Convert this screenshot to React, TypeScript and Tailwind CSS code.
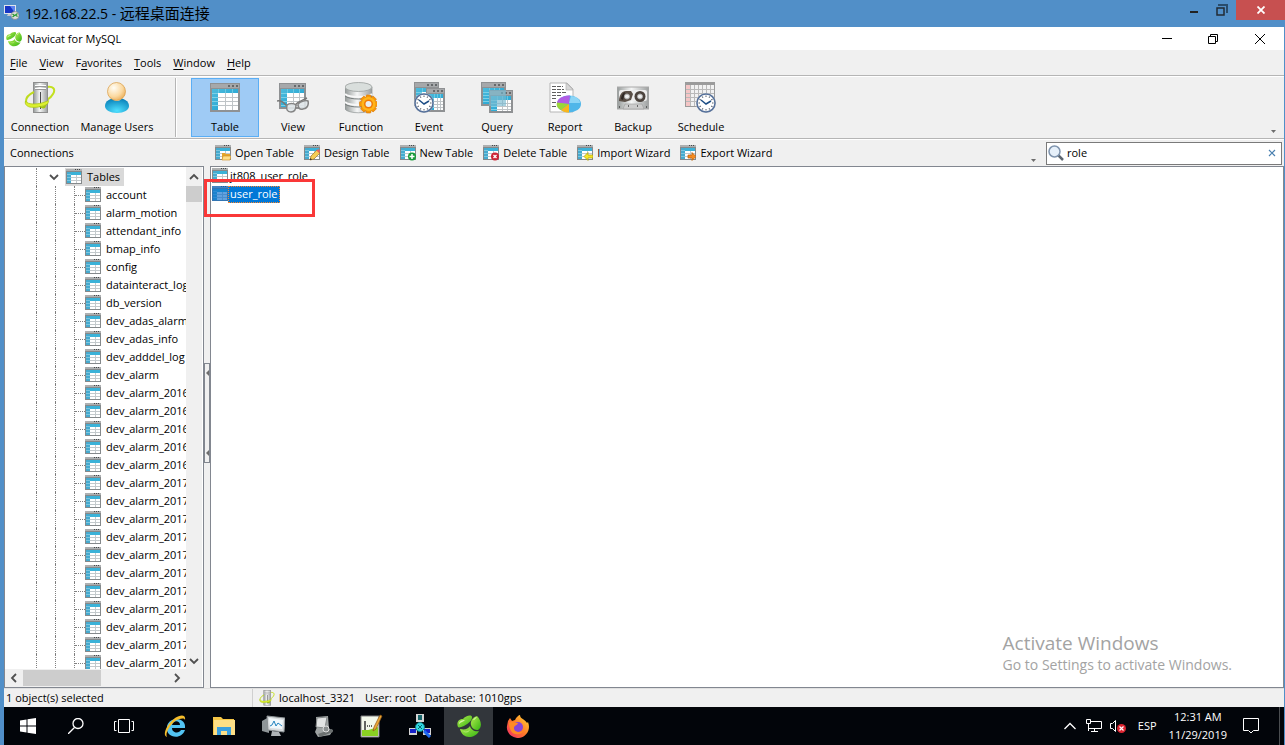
import React, { useState } from 'react'

type IconProps = { className?: string }

// Window with a grid, shared by the toolbar icons
const GridWindow: React.FC<{ x?: number; y?: number; w?: number; h?: number }> = ({ x = 1, y = 1, w = 30, h = 29 }) => {
  const col = Math.round((w - 10) / 3)
  const row = Math.round((h - 12) / 4)
  return (
    <g shapeRendering="crispEdges">
      <rect x={x} y={y} width={w} height={h} fill="#8f9193" />
      <rect x={x + 1} y={y + 1} width={w - 2} height="4" fill="#a6a8aa" />
      <rect x={x + w - 12} y={y + 2} width="2" height="2" fill="#66696b" />
      <rect x={x + w - 8} y={y + 2} width="2" height="2" fill="#66696b" />
      <rect x={x + w - 4} y={y + 2} width="2" height="2" fill="#66696b" />
      <rect x={x + 2} y={y + 6} width={w - 4} height={h - 8} fill="#fff" />
      <path d={`M${x + 2} ${y + 6}h${w - 4}v4H${x + 8}v${h - 12}h-6z`} fill="url(#nvBlue)" />
      {[1, 2].map((n) => (
        <rect key={n} x={x + 8 + n * col} y={y + 10} width="1" height={h - 12} fill="#bfc4c7" />
      ))}
      {[0, 1, 2].map((n) => (
        <rect key={n} x={x + 8 + n * col} y={y + 6} width="1" height="4" fill="#6cc8e2" />
      ))}
      {[1, 2, 3].map((n) => (
        <g key={n}>
          <rect x={x + 8} y={y + 10 + n * row} width={w - 10} height="1" fill="#bfc4c7" />
          <rect x={x + 2} y={y + 10 + n * row} width="6" height="1" fill="#7cd0e6" />
        </g>
      ))}
      <rect x={x + 2} y={y + 10} width="6" height="1" fill="#7cd0e6" />
    </g>
  )
}

const Clock: React.FC<{ cx: number; cy: number }> = ({ cx, cy }) => (
  <g>
    <circle cx={cx} cy={cy} r="10" fill="#c9ccd0" />
    <circle cx={cx} cy={cy} r="9" fill="#fff" stroke="#56719b" strokeWidth="1.5" />
    {[0, 30, 60, 90, 120, 150, 180, 210, 240, 270, 300, 330].map((a) => (
      <path key={a} d={`M${cx} ${cy - 7.5}v1.5`} stroke="#58606b" strokeWidth="1" transform={`rotate(${a} ${cx} ${cy})`} />
    ))}
    <path d={`M${cx - 5} ${cy - 3}L${cx} ${cy + 1}L${cx + 5} ${cy - 2}`} fill="none" stroke="#1d4e86" strokeWidth="1.5" />
  </g>
)

const Svg32: React.FC<{ children: React.ReactNode }> = ({ children }) => (
  <svg viewBox="0 0 32 32" className="h-8 w-8" aria-hidden="true">{children}</svg>
)

const ServerShape = () => (
  <g>
    <path d="M23 5c6-1 9 2 6 7-1 2-3 4-6 6" fill="none" stroke="#c3e01f" strokeWidth="2" />
    <rect x="9.500" y=".500" width="14" height="30" fill="url(#nvMetal)" stroke="#8e8e8e" />
    <path d="M11 3.500h11M11 6.500h11" stroke="#fff" />
    <path d="M11 4.500h11M11 7.500h11" stroke="#9a9a9a" />
    <rect x="16" y="10" width="1" height="17" fill="#4b4b4b" />
    <path d="M10 10C4 13 1 17 2.500 21" fill="none" stroke="#bedb1e" strokeWidth="2" />
    <path d="M1.500 19c2 4 13 4 22 0 1-1 2-1 0 3-5 3-13 4-18 3-3-1-5-3-4-6z" fill="#dcf02f" stroke="#a6c312" strokeWidth=".7" />
    <path d="M15 24c3 1 6 0 8-2l-2 4c-2 1-5 0-6-2z" fill="#a3c40d" />
  </g>
)

const toolIcons: Record<string, React.ReactNode> = {
  Connection: <Svg32><ServerShape /></Svg32>,
  'Manage Users': (
    <Svg32>
      <path d="M4 24c0-5 5-8 12-8s12 3 12 8c0 4-5 7-12 7S4 28 4 24z" fill="url(#nvUser)" />
      <path d="M11 16c2 4 8 4 10 0l-2-2h-6z" fill="#fff" opacity=".8" />
      <circle cx="15.500" cy="9.500" r="9" fill="url(#nvHead)" stroke="#d99b42" strokeWidth=".7" />
    </Svg32>
  ),
  Table: <Svg32><GridWindow /></Svg32>,
  View: (
    <Svg32>
      <GridWindow x={2} w={27} h={26} />
      <path d="M0 19c4-1 6 1 10 5M18 23c4-4 8-5 12-7" fill="none" stroke="#777" strokeWidth="1.500" />
      <path d="M10 23c2-2 7-2 9 0 0 4-1 7-5 7s-5-3-4-7z" fill="#dfe6e9" fillOpacity=".9" stroke="#848484" strokeWidth="1.500" />
      <path d="M21 22c3-3 8-4 10-3 1 4-1 8-5 8-4 1-5-2-5-5z" fill="#dfe6e9" fillOpacity=".9" stroke="#848484" strokeWidth="1.500" />
    </Svg32>
  ),
  Function: (
    <Svg32>
      <path d="M0 5v22c3 5 24 5 27 0V5z" fill="url(#nvMetal)" stroke="#919696" strokeWidth=".7" />
      <path d="M0 12c4 4 23 4 27 0M0 20c4 4 23 4 27 0" fill="none" stroke="#f7f7f7" strokeWidth="2" />
      <path d="M0 14c4 4 23 4 27 0M0 22c4 4 23 4 27 0" fill="none" stroke="#777d7d" />
      <ellipse cx="13.500" cy="5" rx="13.500" ry="4.500" fill="#d9dedc" stroke="#9aa09e" strokeWidth=".8" />
      {[0, 45, 90, 135].map((a) => (
        <rect key={a} x="21" y="13" width="5" height="18" rx="1" fill="#f79708" stroke="#d97300" strokeWidth=".6" transform={`rotate(${a} 23.500 22)`} />
      ))}
      <circle cx="23.500" cy="22" r="7" fill="#ffb51b" />
      <circle cx="23.500" cy="22" r="4.500" fill="#f17907" />
      <circle cx="23.500" cy="22" r="3" fill="#e9eef0" />
    </Svg32>
  ),
  Event: (
    <Svg32>
      <GridWindow x={1} y={0} w={25} h={24} />
      <GridWindow x={13} y={6} w={19} h={24} />
      <Clock cx={11} cy={21} />
    </Svg32>
  ),
  Query: (
    <Svg32>
      <GridWindow x={0} y={0} w={25} h={24} />
      <GridWindow x={8} y={8} w={24} h={23} />
      <rect x="8" y="8" width="17" height="16" fill="#76b9cf" opacity=".65" />
    </Svg32>
  ),
  Report: (
    <Svg32>
      <path d="M1 1h17l6 6v23H1z" fill="#fff" stroke="#b5b5b5" />
      <path d="M17 1v7h7z" fill="#d7d7d7" stroke="#aaa" strokeWidth=".6" />
      <path d="M3 4.500h11M3 7.500h12M3 10.500h14M3 13.500h9M3 16.500h5M3 20.500h4M3 24.500h4" stroke="#5f5f5f" strokeDasharray="4 1" />
      <ellipse cx="20" cy="22" rx="12" ry="8.500" fill="#4fb6e9" />
      <path d="M20 22l1-8.500C14 13 8 17 8 21z" fill="#b15ce5" />
      <path d="M20 22L8 20.500c-1 4 1 6 4 7.500z" fill="#9ad53a" />
      <path d="M20 22l-8 6c2 2 5 2.500 8 2.500z" fill="#f8b61d" />
      <path d="M22 14c6 0 9 4 9 7H20z" fill="#a6e2fb" opacity=".7" />
    </Svg32>
  ),
  Backup: (
    <Svg32>
      <path d="M0 5h32v22H0z" fill="url(#nvMetal)" stroke="#aaa" />
      <rect x="2" y="8" width="28" height="11" rx="2" fill="#ededed" />
      <path d="M2 19c0-6 3-10 7-10h5l2 3-2 6-6 2z" fill="#5a4f47" />
      <path d="M4 17c0-3 2-6 4-7l-2 8z" fill="#2e2723" />
      <circle cx="23" cy="14.500" r="5.500" fill="#4c433d" />
      <circle cx="10" cy="14.500" r="2.500" fill="#eee" stroke="#aaa" />
      <circle cx="23" cy="14.500" r="2.500" fill="#eee" stroke="#aaa" />
      <path d="M6 27l2-5h17l2 5z" fill="#ccc" stroke="#999" strokeWidth=".6" />
      <path d="M11 24h1M20 24h1M2 25h1M29 25h1" stroke="#444" strokeWidth="1.500" />
    </Svg32>
  ),
  Schedule: (
    <Svg32>
      <rect x="0" y="0" width="30" height="25" fill="#9b9b9b" />
      <rect x="1" y="3" width="28" height="21" fill="#f2f2f2" />
      <rect x="1" y="3" width="4" height="21" fill="#f4c5c5" />
      <path d="M5.500 3v21M9.500 3v21M13.500 3v21M17.500 3v21M21.500 3v21M25.500 3v21M1 7.500h28M1 11.500h28M1 15.500h28M1 19.500h28" stroke="#b9b9b9" />
      <Clock cx={21} cy={21} />
    </Svg32>
  )
}

type Badge = 'open' | 'design' | 'new' | 'delete' | 'import' | 'export'

const SmallTable: React.FC<{ badge?: Badge; selected?: boolean }> = ({ badge, selected }) => (
  <svg viewBox="0 0 16 16" className="h-4 w-4 shrink-0" aria-hidden="true">
    <g shapeRendering="crispEdges">
      <rect width="16" height="15" fill="#85898b" />
      <rect width="16" height="2" fill="#aeb0b1" />
      <path d="M9 0h1v1H9zM11 0h1v1h-1zM13 0h1v1h-1z" fill="#44484a" />
      <rect x="1" y="3" width="14" height="11" fill="#fff" />
      <rect x="1" y="3" width="14" height="3" fill="#3bb2d8" />
      <rect x="1" y="3" width="4" height="11" fill="#45aacf" />
      <path d="M5 8h10v1H5zM5 11h10v1H5z" fill="#c3c9cc" />
      <path d="M10 6h1v8h-1z" fill="#c3c9cc" />
      <path d="M1 5h4v1H1zM1 8h4v1H1zM1 11h4v1H1z" fill="#7cc6df" />
      {selected && <rect width="16" height="15" fill="#0069cb" opacity=".62" />}
    </g>
    {badge === 'open' && (
      <g>
        <path d="M7 8h3l1 1h4v6H7z" fill="#e5a52c" />
        <path d="M8 11h8l-1 4H7z" fill="#ffdf88" stroke="#cd8b1c" strokeWidth=".6" />
      </g>
    )}
    {badge === 'design' && (
      <g>
        <path d="M6 15l1-4 6-6 3 3-6 6z" fill="#f5cd54" stroke="#9b742e" strokeWidth=".7" />
        <path d="M12.500 5.500L14 4l2 2-1 2z" fill="#e8625f" />
        <path d="M6 15l.500-2 1.500 1.500z" fill="#222" />
      </g>
    )}
    {badge === 'new' && (
      <g>
        <circle cx="12" cy="11.500" r="4" fill="#179b39" />
        <path d="M12 9v5M9.500 11.500h5" stroke="#fff" strokeWidth="1.500" />
      </g>
    )}
    {badge === 'delete' && (
      <g>
        <circle cx="12" cy="11.500" r="4" fill="#cc2434" />
        <path d="M10.500 10l3 3M13.500 10l-3 3" stroke="#fff" strokeWidth="1.300" />
      </g>
    )}
    {badge === 'import' && <path d="M7 11.500L11 7.500V10h5v3h-5v2.500z" fill="#f4e52a" stroke="#a89b06" strokeWidth=".7" />}
    {badge === 'export' && <path d="M16 11.500L12 7.500V10H8v3h4v2.500z" fill="#f58b1f" stroke="#b65d08" strokeWidth=".7" />}
  </svg>
)

const NavicatLogo: React.FC<IconProps> = ({ className }) => (
  <svg viewBox="0 0 24 24" className={className} aria-hidden="true">
    <path d="M1 13C-1 8 2 5 6 5c3-4 10-5 9-1-1 4-5 6-8 8-3 1-5 2-6 1z" fill="url(#nvGreen)" />
    <path d="M14 11c-1-4 2-8 6-9 5 5 5 12 1 14-3 0-6-1-7-5z" fill="url(#nvGreen)" />
    <path d="M3 15c5 1 8 0 10-3 1 4 5 6 9 5-2 4-6 6-10 6-4 0-8-3-9-8z" fill="url(#nvGreen)" />
    <path d="M2 10c0-3 3-4 6-4-2 2-4 2-6 4zM16 6c1-1 2-3 4-3-2 2-2 3-4 3z" fill="#f0ffc8" opacity=".8" />
    <path d="M6 17c3 1 6 0 7-2 0 3-4 5-7 2z" fill="#dcff9b" opacity=".5" />
  </svg>
)

const Defs = () => (
  <svg className="absolute h-0 w-0" aria-hidden="true">
    <defs>
      <linearGradient id="nvBlue" x1="0" y1="0" x2="1" y2="1">
        <stop offset="0" stopColor="#4fbcdc" />
        <stop offset="1" stopColor="#189ed0" />
      </linearGradient>
      <linearGradient id="nvMetal" x1="0" y1="0" x2="1" y2="0">
        <stop offset="0" stopColor="#949998" />
        <stop offset=".45" stopColor="#f5f6f6" />
        <stop offset="1" stopColor="#9b9e9e" />
      </linearGradient>
      <radialGradient id="nvUser" cx=".5" cy=".85" r=".8">
        <stop offset="0" stopColor="#4fe0ff" />
        <stop offset="1" stopColor="#0b83bb" />
      </radialGradient>
      <radialGradient id="nvHead" cx=".35" cy=".3" r=".8">
        <stop offset="0" stopColor="#fffdf5" />
        <stop offset=".6" stopColor="#fbd9a0" />
        <stop offset="1" stopColor="#e8a74c" />
      </radialGradient>
      <linearGradient id="nvGreen" x1="0" y1="0" x2="1" y2="1">
        <stop offset="0" stopColor="#b5ec50" />
        <stop offset="1" stopColor="#35b512" />
      </linearGradient>
      <linearGradient id="nvFox" x1="1" y1="0" x2="0" y2="1">
        <stop offset="0" stopColor="#ffdf36" />
        <stop offset=".5" stopColor="#ff7a27" />
        <stop offset="1" stopColor="#f0246d" />
      </linearGradient>
    </defs>
  </svg>
)

const menus = [
  { label: 'File', key: 0 },
  { label: 'View', key: 0 },
  { label: 'Favorites', key: 1 },
  { label: 'Tools', key: 0 },
  { label: 'Window', key: 0 },
  { label: 'Help', key: 0 }
]

const objectTypes = ['Table', 'View', 'Function', 'Event', 'Query', 'Report', 'Backup', 'Schedule']

const actions: { label: string; badge: Badge }[] = [
  { label: 'Open Table', badge: 'open' },
  { label: 'Design Table', badge: 'design' },
  { label: 'New Table', badge: 'new' },
  { label: 'Delete Table', badge: 'delete' },
  { label: 'Import Wizard', badge: 'import' },
  { label: 'Export Wizard', badge: 'export' }
]

const tables = [
  'account', 'alarm_motion', 'attendant_info', 'bmap_info', 'config', 'datainteract_log', 'db_version',
  'dev_adas_alarm', 'dev_adas_info', 'dev_adddel_log', 'dev_alarm',
  'dev_alarm_201608', 'dev_alarm_201609', 'dev_alarm_201610', 'dev_alarm_201611', 'dev_alarm_201612',
  'dev_alarm_201701', 'dev_alarm_201702', 'dev_alarm_201703', 'dev_alarm_201704', 'dev_alarm_201705',
  'dev_alarm_201706', 'dev_alarm_201707', 'dev_alarm_201708', 'dev_alarm_201709', 'dev_alarm_201710',
  'dev_alarm_201711'
]

const Chevron: React.FC<{ dir: 'up' | 'down' | 'left' | 'right' }> = ({ dir }) => {
  const paths = { up: 'M1 7l4-4 4 4', down: 'M1 3l4 4 4-4', left: 'M7 1L3 5l4 4', right: 'M3 1l4 4-4 4' }
  return (
    <svg viewBox="0 0 10 10" className="h-2.5 w-2.5" aria-hidden="true">
      <path d={paths[dir]} fill="none" stroke="#505050" strokeWidth="1.800" />
    </svg>
  )
}

const DropMark = () => (
  <svg viewBox="0 0 5 3" className="h-[3px] w-[5px]" aria-hidden="true"><path d="M0 0h5L2.500 3z" fill="#6d6d6d" /></svg>
)

const TitleBars = () => (
  <>
    <header className="flex h-[27px] shrink-0 items-start pl-1">
      <svg viewBox="0 0 16 16" className="mt-1 h-4 w-4" aria-hidden="true">
        <path d="M0 1h12v9H0z" fill="#dfe4ea" />
        <path d="M1 2h10v7H1z" fill="#1736c4" />
        <path d="M6 2h5v7z" fill="#5d83ef" />
        <path d="M4 10h4v2H3z" fill="#c3c7cb" />
        <circle cx="11" cy="11.500" r="4" fill="#dcdcdc" stroke="#777" strokeWidth=".6" />
        <path d="M8.500 10l2 1.500-2 1.500M13.500 9.500l-2 1.500 2 1.500" fill="none" stroke="#259a2f" strokeWidth="1.200" />
      </svg>
      <h1 className="ml-[5px] flex h-[27px] items-center text-sm text-black">
        192.168.22.5 -&nbsp;<span className="text-[15px]">远程桌面连接</span>
      </h1>
      <div className="ml-auto flex h-5">
        <button aria-label="Minimize remote session" className="flex w-7 items-center justify-center pt-1">
          <span className="h-0.5 w-2 bg-[#222]" />
        </button>
        <button aria-label="Restore remote session" className="flex w-7 items-center justify-center">
          <svg viewBox="0 0 12 12" className="h-3 w-3" aria-hidden="true">
            <path d="M3 2V1h8v7h-1" fill="none" stroke="#284c6c" strokeWidth="2" />
            <path d="M1 4h7v7H1z" fill="none" stroke="#222b33" strokeWidth="1.500" />
          </svg>
        </button>
        <button aria-label="Close remote session" className="flex w-[49px] items-center justify-center bg-[#c75050]">
          <svg viewBox="0 0 8 8" className="h-2 w-2" aria-hidden="true"><path d="M.500.500l7 7M7.500.500l-7 7" stroke="#fff" strokeWidth="1.800" /></svg>
        </button>
      </div>
    </header>
    <div className="ml-1 mr-px flex h-[23px] shrink-0 items-center bg-white pl-0.5">
      <NavicatLogo className="h-4 w-4" />
      <h2 className="ml-[5px]">Navicat for MySQL</h2>
      <div className="ml-auto flex">
        <button aria-label="Minimize" className="flex h-[23px] w-[46px] items-center justify-center">
          <span className="h-px w-2.5 bg-black" />
        </button>
        <button aria-label="Restore" className="flex h-[23px] w-[45px] items-center justify-center">
          <svg viewBox="0 0 10 10" className="h-2.5 w-2.5" aria-hidden="true"><path d="M.500 2.500h7v7h-7zM2.500 2V.500h7v7H8" fill="none" stroke="#000" /></svg>
        </button>
        <button aria-label="Close" className="flex h-[23px] w-[49px] items-center justify-center">
          <svg viewBox="0 0 10 10" className="h-2.5 w-2.5" aria-hidden="true"><path d="M0 0l10 10M10 0L0 10" stroke="#000" /></svg>
        </button>
      </div>
    </div>
  </>
)

const Toolbar: React.FC<{ active: string; onPick: (t: string) => void }> = ({ active, onPick }) => (
  <div className="flex h-[63px] shrink-0 items-stretch border-b border-t border-b-[#b5b5b5] border-t-white py-px">
    {['Connection', 'Manage Users'].map((t, i) => (
      <button key={t} className={`flex flex-col items-center border border-transparent pt-[3px] ${i === 0 ? 'w-[72px]' : 'w-[82px]'}`}>
        {toolIcons[t]}
        <span className="mt-1 whitespace-nowrap">{t}</span>
      </button>
    ))}
    <span className="ml-[17px] mr-3.5 w-0.5 border-l border-[#b5b5b5] bg-white" />
    {objectTypes.map((t) => (
      <button
        key={t}
        onClick={() => onPick(t)}
        className={`flex w-[68px] flex-col items-center border pt-[3px] ${
          active === t ? 'border-[#5aaef5] bg-[#9fcbf5]' : 'border-transparent'
        }`}
      >
        {toolIcons[t]}
        <span className="mt-1">{t}</span>
      </button>
    ))}
    <span className="mb-1 ml-auto mr-2 self-end"><DropMark /></span>
  </div>
)

const ConnectionTree = () => (
  <aside className="flex w-[200px] shrink-0 flex-col border border-[#828790] bg-white pr-px">
    <div className="flex min-h-0 flex-1">
      <ul className="min-w-0 flex-1 overflow-hidden pt-px">
        <li className="flex h-[18px] items-center">
          <span className="ml-[31px] h-full w-[13px] shrink-0 border-l border-dotted border-[#808080]" />
          <span className="w-4 shrink-0"><Chevron dir="down" /></span>
          <span className="flex h-full items-center gap-[5px] bg-[#d9d9d9] pl-px pr-1">
            <SmallTable />
            Tables
          </span>
        </li>
        {tables.map((t) => (
          <li key={t} className="flex h-[18px] items-center whitespace-nowrap">
            <span className="ml-[31px] h-full w-[19px] shrink-0 border-l border-dotted border-[#808080]" />
            <span className="h-full w-[19px] shrink-0 border-l border-dotted border-[#808080]" />
            <span className="flex h-full w-[11px] shrink-0 items-center border-l border-dotted border-[#808080]">
              <span className="w-full border-t border-dotted border-[#808080]" />
            </span>
            <SmallTable />
            <span className="ml-[5px]">{t}</span>
          </li>
        ))}
      </ul>
      <div className="flex w-4 flex-col items-center bg-[#f0f0f0] pb-[3px] pt-[5px]">
        <Chevron dir="up" />
        <span className="mt-1 h-4 w-full bg-[#cdcdcd]" />
        <span className="mt-auto"><Chevron dir="down" /></span>
      </div>
    </div>
    <div className="flex h-[18px] items-center bg-[#f0f0f0] pl-1 pr-5">
      <Chevron dir="left" />
      <span className="ml-1 h-4 w-[78px] bg-[#cdcdcd]" />
      <span className="ml-auto"><Chevron dir="right" /></span>
    </div>
  </aside>
)

const StatusBar = () => (
  <footer className="flex h-[19px] shrink-0 items-center border-t border-[#e0e0e0] pl-0.5">
    <span className="h-full w-[247px] border-r border-[#d0d0d0]">1 object(s) selected</span>
    <svg viewBox="0 0 32 32" className="ml-1.5 h-4 w-4" aria-hidden="true"><ServerShape /></svg>
    <span className="ml-1">localhost_3321</span>
    <span className="ml-2.5">User: root</span>
    <span className="ml-2">Database: 1010gps</span>
  </footer>
)

const pinned: { name: string; icon: React.ReactNode }[] = [
  {
    name: 'Internet Explorer',
    icon: (
      <g>
        <path d="M22 14H9c0 5 7 6 9 2h4c-2 6-8 8-13 6C2 20 2 9 9 6c7-3 14 1 13 8zM9 11h8c0-5-7-5-8 0z" fill="#52c3f2" />
        <path d="M4 23C-1 22 3 11 12 4c5-3 11-4 10 2-1-3-6-1-10 1C6 12 2 20 4 23z" fill="#f6bd2b" />
      </g>
    )
  },
  {
    name: 'File Explorer',
    icon: (
      <g>
        <path d="M1 3h8l2 2h11v16H1z" fill="#f5c646" />
        <path d="M2 6h21v15H2z" fill="#fddf86" />
        <path d="M5 13h14v8h-4v-4h-6v4H5z" fill="#3aa0e0" />
      </g>
    )
  },
  {
    name: 'Resource Monitor',
    icon: (
      <g>
        <path d="M1 7l7-4v16l-7-2z" fill="#8e9598" />
        <path d="M6 2l18 2-1 14-16-2z" fill="#d7dbdd" stroke="#8b9194" />
        <path d="M8 4l14 2-1 9-12-1z" fill="#f1f8fb" />
        <path d="M9 12l2-1 2-4 2 5 2-3 4 3" fill="none" stroke="#2384c0" />
        <path d="M11 17l7 1 2 4H10z" fill="#aeb3b6" />
      </g>
    )
  },
  {
    name: 'Server',
    icon: (
      <g>
        <path d="M6 3l12-1 1 13 4 1-3 5-12 2-3-5 2-5z" fill="#9ea3a3" />
        <path d="M7 4l10-1-2 11-9-1z" fill="#e2e4e4" stroke="#858989" />
        <path d="M8 20l14-5 1 3-13 5z" fill="#6b7070" />
        <circle cx="16" cy="15" r="3" fill="#8a8f8f" stroke="#ddd" />
      </g>
    )
  },
  {
    name: 'Notepad',
    icon: (
      <g>
        <path d="M2 2h18v21H2z" fill="#f4f8ea" stroke="#7c7c7c" />
        <path d="M3 16h16v6H3zM3 18l16-5v5z" fill="#8ad122" />
        <path d="M6 7v9M8 12h1M10 12h1M12 12h1" stroke="#333" strokeWidth="1.500" />
        <path d="M14 17l1-4 6-12 2 1-6 13z" fill="#eda637" stroke="#8d5714" strokeWidth=".7" />
      </g>
    )
  },
  {
    name: 'Network Search',
    icon: (
      <g>
        <path d="M12 8v6M4 16h16" stroke="#eee" />
        <path d="M8 0h8v8H8zM1 14h8v7H1zM15 14h8v7h-8z" fill="#d4d4d4" />
        <path d="M10 1h4v5h-4z" fill="#16656b" />
        <path d="M2 15h6v4H2zM16 15h6v4h-6z" fill="#1721c9" />
        <circle cx="12" cy="13" r="4.500" fill="#32d8e4" stroke="#0a747d" />
        <path d="M10 11l4 4M14 11l-4 4" stroke="#086b70" />
        <path d="M16 17l6 6" stroke="#1f6bf2" strokeWidth="3" />
      </g>
    )
  },
  { name: 'Navicat', icon: null },
  {
    name: 'Firefox',
    icon: (
      <g>
        <path d="M2 7l2-3 2 3 3-1c1-3 4-5 5-5 0 4 5 4 7 8l1-1c3 7-1 15-9 16C5 24 0 18 1 12z" fill="url(#nvFox)" />
        <circle cx="12" cy="13" r="5" fill="#8745d8" />
        <path d="M3 9c3-2 5 0 9 0-1 3-4 2-4 5 0 4 6 6 10 2-2 5-10 6-13 1-1-2-2-5-2-8z" fill="#ff8b25" />
      </g>
    )
  }
]

const Taskbar = () => (
  <nav className="ml-1 mr-px flex h-[38px] shrink-0 items-stretch bg-[#02050a] text-white" aria-label="Taskbar">
    <button aria-label="Start" className="flex w-12 items-center justify-center">
      <svg viewBox="0 0 16 16" className="h-4 w-4" aria-hidden="true"><path d="M0 2.500L6.500 1.500V7.500H0zM7.500 1.300L16 0v7.500H7.500zM0 8.500h6.500v6L0 13.500zM7.500 8.500H16V16l-8.500-1.300z" fill="#fff" /></svg>
    </button>
    <button aria-label="Search" className="flex w-12 items-center justify-center">
      <svg viewBox="0 0 16 16" className="h-4 w-4" aria-hidden="true"><circle cx="10" cy="5.500" r="5" fill="none" stroke="#fff" strokeWidth="1.300" /><path d="M6.500 9.500L0 16" stroke="#fff" strokeWidth="1.300" /></svg>
    </button>
    <button aria-label="Task View" className="flex w-12 items-center justify-center">
      <svg viewBox="0 0 20 14" className="h-3.5 w-5" aria-hidden="true"><path d="M4.500.500h11v13h-11zM2.500 2.500h-2v9h2M17.500 2.500h2v9h-2" fill="none" stroke="#fff" /></svg>
    </button>
    <div className="ml-0.5 flex">
      {pinned.map((p) => (
        <button key={p.name} aria-label={p.name} className={`flex w-[49px] items-center justify-center ${p.name === 'Navicat' ? 'bg-[#32363b]' : ''}`}>
          {p.icon ? <svg viewBox="0 0 24 24" className="h-6 w-6" aria-hidden="true">{p.icon}</svg> : <NavicatLogo className="h-6 w-6" />}
        </button>
      ))}
    </div>
    <div className="ml-auto flex items-center">
      <svg viewBox="0 0 12 8" className="h-2 w-3" aria-hidden="true"><path d="M.500 7L6 1.500 11.500 7" fill="none" stroke="#fff" strokeWidth="1.300" /></svg>
      <svg viewBox="0 0 16 14" className="ml-2.5 h-3.5 w-4" aria-hidden="true"><path d="M4.500 2.500h11v7H2.500v-4M.500.500h4v4h-4zM2.500 5v7M8.500 10v2.500M5 12.500h7" fill="none" stroke="#fff" /></svg>
      <svg viewBox="0 0 16 14" className="ml-2 h-3.5 w-4" aria-hidden="true">
        <path d="M.500 4.500h2l3-3v11l-3-3h-2z" fill="none" stroke="#fff" />
        <circle cx="11.500" cy="9.500" r="4.500" fill="#dc2430" />
        <path d="M9.500 7.500l4 4M13.500 7.500l-4 4" stroke="#fff" strokeWidth="1.200" />
      </svg>
      <span className="ml-3">ESP</span>
      <time className="ml-3 text-center leading-[18px]">12:31 AM<br />11/29/2019</time>
      <button aria-label="Notifications" className="ml-4">
        <svg viewBox="0 0 16 16" className="h-4 w-4" aria-hidden="true"><path d="M.500.500h15v12h-5L8 15l-2.500-2.500h-5z" fill="none" stroke="#fff" /></svg>
      </button>
      <span className="ml-5 mr-1 h-full w-px bg-[#4a4d50]" />
    </div>
  </nav>
)

const App: React.FC = () => {
  const [active, setActive] = useState('Table')
  const [query, setQuery] = useState('role')

  return (
    <div className="flex h-screen flex-col overflow-hidden bg-[#518fc8] font-['Open_Sans','Noto_Sans_CJK_SC',sans-serif] text-[11px] leading-[18px] text-black">
      <Defs />
      <TitleBars />

      <div className="ml-1 mr-px flex min-h-0 flex-1 flex-col bg-[#f0f0f0]">
        {/* Menu bar */}
        <div className="flex h-[26px] shrink-0 items-center gap-3 border-b border-[#b5b5b5] pl-1.5">
          {menus.map((m) => (
            <button key={m.label}>
              {m.label.slice(0, m.key)}
              <span className="underline underline-offset-2">{m.label[m.key]}</span>
              {m.label.slice(m.key + 1)}
            </button>
          ))}
        </div>

        <Toolbar active={active} onPick={setActive} />

        {/* Object actions and filter */}
        <div className="flex h-[27px] shrink-0 items-center border-t border-white">
          <h3 className="w-[211px] shrink-0 pl-1.5">Connections</h3>
          <div className="flex gap-2.5">
            {actions.map((a) => (
              <button key={a.label} className="flex items-center gap-1 whitespace-nowrap">
                <SmallTable badge={a.badge} />
                {a.label}
              </button>
            ))}
          </div>
          <span className="mb-1 ml-auto mr-2.5 self-end"><DropMark /></span>
          <label className="mr-0.5 flex h-[23px] w-[236px] items-center border border-[#7a7a7a] bg-white px-px">
            <svg viewBox="0 0 16 16" className="h-4 w-4" aria-hidden="true">
              <path d="M10 10l5 5" stroke="#5d6670" strokeWidth="2.500" />
              <circle cx="6.500" cy="6.500" r="5.500" fill="#e6f0fa" stroke="#7e93ad" strokeWidth="1.500" />
            </svg>
            <input
              aria-label="Filter objects"
              value={query}
              onChange={(e) => setQuery(e.target.value)}
              className="ml-[3px] min-w-0 flex-1 bg-transparent outline-none"
            />
            <button aria-label="Clear filter" onClick={() => setQuery('')} className="mr-1">
              <svg viewBox="0 0 8 8" className="h-2 w-2" aria-hidden="true"><path d="M1 1l6 6M7 1L1 7" stroke="#4a80b0" strokeWidth="1.200" /></svg>
            </button>
          </label>
        </div>

        <div className="flex min-h-0 flex-1">
          <ConnectionTree />

          {/* Splitter with its collapse grip */}
          <div className="flex w-1.5 shrink-0 flex-col justify-center pb-7">
            <div className="flex h-[100px] flex-col items-center justify-between border border-[#828790] py-1.5">
              {[0, 1].map((n) => (
                <svg key={n} viewBox="0 0 3 6" className="h-1.5 w-[3px]" aria-hidden="true"><path d="M3 0v6L0 3z" fill="#6d6d6d" /></svg>
              ))}
            </div>
          </div>

          <main className="relative flex-1 border border-[#828790] bg-white px-px">
            <ul>
              <li className="flex h-[18px] items-center gap-0.5">
                <SmallTable />
                jt808_user_role
              </li>
              <li className="flex h-[18px] items-center">
                <SmallTable selected />
                <span className="h-[17px] border border-dotted border-[#ff8728] bg-[#0078d7] px-px leading-[14px] text-white">user_role</span>
              </li>
            </ul>
            <span className="absolute -left-[7px] top-3 h-[38px] w-[111px] border-[3px] border-[#fa3838]" />
            <div className="absolute bottom-3 right-[51px] text-[#a3a3a3]">
              <p className="text-[19px] leading-6">Activate Windows</p>
              <p className="text-sm">Go to Settings to activate Windows.</p>
            </div>
          </main>
        </div>

        <StatusBar />
      </div>

      <Taskbar />
    </div>
  )
}

export default App
